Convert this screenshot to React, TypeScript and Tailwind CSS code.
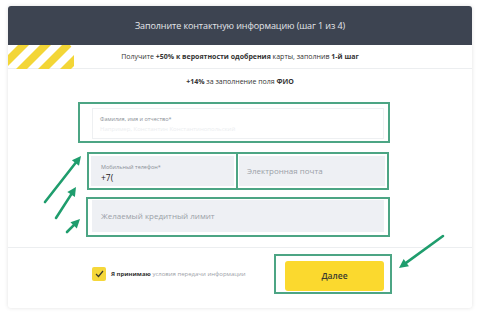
import React from "react";

const GREEN = "#1f9d6d";

type Arrow = { x1: number; y1: number; x2: number; y2: number };

const arrows: Arrow[] = [
  { x1: 45, y1: 202, x2: 81, y2: 156 },
  { x1: 56, y1: 218, x2: 76, y2: 187 },
  { x1: 67, y1: 232, x2: 80, y2: 219 },
  { x1: 443, y1: 236, x2: 399, y2: 268 },
];

const ArrowShape = ({ a }: { a: Arrow }) => {
  const dx = a.x2 - a.x1;
  const dy = a.y2 - a.y1;
  const len = Math.hypot(dx, dy);
  const ux = dx / len;
  const uy = dy / len;
  const L = 9;
  const W = 4.5;
  const bx = a.x2 - ux * L;
  const by = a.y2 - uy * L;
  const pts = `${a.x2},${a.y2} ${bx - uy * W},${by + ux * W} ${bx + uy * W},${by - ux * W}`;
  return (
    <g>
      <line x1={a.x1} y1={a.y1} x2={bx + ux * 2} y2={by + uy * 2} stroke={GREEN} strokeWidth={2.6} strokeLinecap="round" />
      <polygon points={pts} fill={GREEN} />
    </g>
  );
};

const Stripes = () => (
  <svg width="66" height="24" viewBox="0 0 66 24" className="absolute left-0 top-0">
    <defs>
      <clipPath id="sc">
        <path d="M0 0 H62 L66 5 V24 H0 Z" />
      </clipPath>
    </defs>
    <g clipPath="url(#sc)" fill="#f3d637">
      {[-14, 8, 30, 52].map((x) => (
        <polygon key={x} points={`${x},24 ${x + 11},24 ${x + 35},0 ${x + 24},0`} />
      ))}
    </g>
  </svg>
);

export default function App() {
  return (
    <div
      className="relative w-[480px] h-[315px] bg-white pt-[6px] overflow-hidden"
      style={{ fontFamily: "'Open Sans', 'Noto Sans', sans-serif" }}
    >
      <div className="mx-[8px] h-[302px] rounded-[3px] bg-white shadow-[0_0_4px_rgba(0,0,0,0.12)] flex flex-col">
        <div className="h-[39px] bg-[#3d4451] rounded-t-[3px] flex items-center justify-center text-[9px] text-[#e4e6ea] tracking-[-0.1px]">
          Заполните контактную информацию (шаг 1 из 4)
        </div>
        <div className="relative h-[24px] border-b border-[#eceef0] flex items-center justify-center text-[7px] text-[#333] bg-white">
          <Stripes />
          <span className="pt-[1px]">
            Получите <b>+50% к вероятности одобрения</b> карты, заполнив <b>1-й шаг</b>
          </span>
        </div>
        <div className="h-[179px] border-b border-[#eceef0] flex flex-col">
          <div className="mt-[8px] h-[10px] text-center text-[7px] text-[#333] leading-[10px]">
            <b>+14%</b> за заполнение поля <b>ФИО</b>
          </div>
          <div className="mt-[15px] ml-[70px] w-[312px] h-[41px] border-2 border-[#4ca584] pl-[12px] pr-[4px] pt-[4px] pb-[2px]">
            <div className="h-full border border-[#eef0f2] bg-white px-[7px] pt-[7px] flex flex-col">
              <span className="text-[5.5px] text-[#8a8f96] leading-[7px]">Фамилия, имя и отчество*</span>
              <span className="text-[6px] text-[#eceef0] leading-[9px] mt-[2px]">Например, Константин Константинопольский</span>
            </div>
          </div>
          <div className="mt-[9px] ml-[79px] w-[302px] h-[38px] flex">
            <div className="w-[151px] h-full border-2 border-[#4ca584] p-[2px]">
              <div className="h-full bg-[#eef0f4] px-[10px] pt-[8px] flex flex-col">
                <span className="text-[5.5px] text-[#8a8f96] leading-[7px]">Мобильный телефон*</span>
                <span className="text-[8.5px] text-[#222] leading-[10px] mt-[2px]">+7(</span>
              </div>
            </div>
            <div className="w-[151px] h-full border-2 border-l-0 border-[#4ca584] p-[2px] pl-[1px]">
              <div className="h-full bg-[#eef0f4] px-[8px] flex items-center text-[8px] text-[#9aa0a7]">
                Электронная почта
              </div>
            </div>
          </div>
          <div className="mt-[7px] ml-[78px] w-[304px] h-[40px] border-2 border-[#4ca584] pl-[4px] pr-[4px] pt-[1px] pb-[3px]">
            <div className="h-full bg-[#eef0f4] px-[9px] flex items-center text-[8px] text-[#9aa0a7]">
              Желаемый кредитный лимит
            </div>
          </div>
        </div>
        <div className="flex-1 flex items-start">
          <div className="w-[266px] h-[52px] pl-[84px] flex items-center gap-[5px]">
            <div className="w-[14px] h-[14px] rounded-[2px] bg-[#f5d73a] flex items-center justify-center">
              <svg width="9" height="8" viewBox="0 0 9 8">
                <path d="M1 4 L3.5 6.5 L8 1" stroke="#3a3a2a" strokeWidth="1.2" fill="none" />
              </svg>
            </div>
            <span className="text-[6px] text-[#9ca1a8] whitespace-nowrap">
              <b className="text-[#333]">Я принимаю</b> условия передачи информации
            </span>
          </div>
          <div className="mt-[6px] w-[118px] h-[40px] border-2 border-[#4ca584] pl-[9px] pr-[6px] pt-[5px] pb-[1px]">
            <div className="h-full rounded-[3px] bg-[#fbd92e] flex items-center justify-center text-[8.5px] font-semibold text-[#3a3a30]">
              Далее
            </div>
          </div>
        </div>
      </div>
      <svg className="absolute inset-0 pointer-events-none" width="480" height="315">
        {arrows.map((a, i) => (
          <ArrowShape key={i} a={a} />
        ))}
      </svg>
    </div>
  );
}
